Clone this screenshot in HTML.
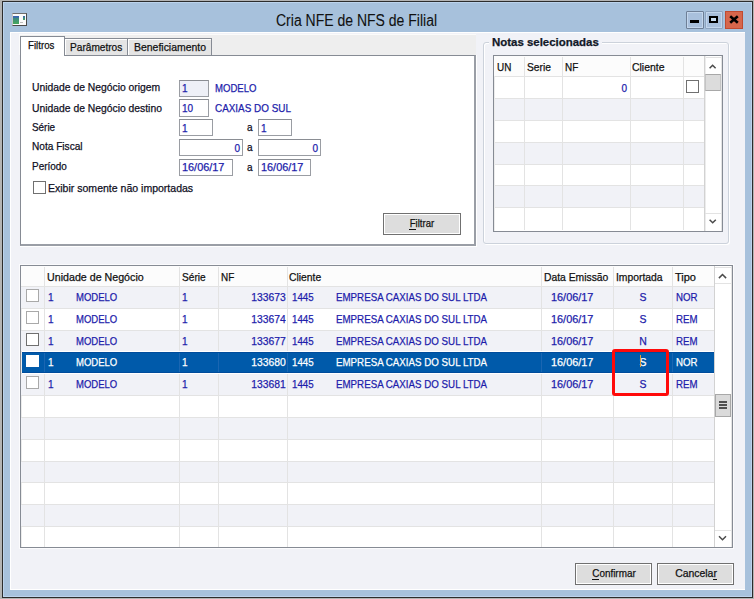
<!DOCTYPE html><html><head><meta charset="utf-8"><style>
html,body{margin:0;padding:0;width:754px;height:599px;overflow:hidden;background:#b4b4b4;}
*{box-sizing:border-box;}
.t{position:absolute;white-space:pre;line-height:20px;font-family:"Liberation Sans",sans-serif;font-size:11px;-webkit-text-stroke:0.25px currentColor;}
</style></head><body>
<div style="position:absolute;left:2px;top:1px;width:751px;height:597px;background:#2c2c2c;"></div>
<div style="position:absolute;left:3px;top:2px;width:749px;height:595px;background:#bcd3ec;"></div>
<div style="position:absolute;left:4px;top:3px;width:747px;height:593px;background:#a7c1dc;"></div>
<div class="t" style="left:276px;top:11px;font-size:16px;color:#111;-webkit-text-stroke:0.1px #111;transform:scaleX(0.875);transform-origin:0 0;">Cria NFE de NFS de Filial</div>
<div style="position:absolute;left:12px;top:13px;width:15px;height:13px;background:#fbfbfb;border-top:1px solid #6e6e6e;border-left:1px solid #c4c4c4;border-right:1px solid #4a4a4a;border-bottom:1px solid #4a4a4a;"></div>
<div style="position:absolute;left:13px;top:16px;width:6px;height:8px;background:linear-gradient(#3a66b0 0,#3a66b0 14%,#3d8a80 30%,#46a85a 100%);"></div>
<div style="position:absolute;left:23px;top:16px;width:2px;height:4px;background:linear-gradient(#3a66b0,#46a85a);"></div>
<div style="position:absolute;left:20px;top:22px;width:3px;height:1px;background:#bdbdbd;"></div>
<div style="position:absolute;left:686px;top:11px;width:18px;height:18px;background:#a9c0dc;border:1px solid #6e7f96;box-shadow:inset 0 0 0 1px #c3d6ec;border-radius:1px;"></div>
<div style="position:absolute;left:690px;top:20px;width:9px;height:3px;background:#000;"></div>
<div style="position:absolute;left:705px;top:11px;width:18px;height:18px;background:#a9c0dc;border:1px solid #8ea4bf;box-shadow:inset 0 0 0 1px #c3d6ec;border-radius:1px;"></div>
<div style="position:absolute;left:709px;top:16px;width:9px;height:7px;border:2px solid #000;background:#c8dcf0;"></div>
<div style="position:absolute;left:725px;top:11px;width:18px;height:18px;background:#d6664c;border:1px solid #c04a30;"></div>
<svg style="position:absolute;left:725px;top:11px" width="18" height="18"><path d="M5.2 5.2 L12.8 11.8 M12.8 5.2 L5.2 11.8" stroke="#000" stroke-width="2.6" stroke-linecap="butt"/></svg>
<div style="position:absolute;left:10px;top:32px;width:735px;height:558px;background:#f1f2f7;border-top:1px solid #fff;border-left:1px solid #fff;border-bottom:1px solid #fff;"></div>
<div style="position:absolute;left:19px;top:34px;width:457px;height:21px;background:#eeeeee;border-top:1px solid #fbfbfb;border-left:1px solid #fbfbfb;"></div>
<div style="position:absolute;left:20px;top:55px;width:457px;height:192px;border-right:1px solid #fff;border-bottom:1px solid #fff;"></div>
<div style="position:absolute;left:20px;top:55px;width:456px;height:191px;background:#fff;border:1px solid #868b94;border-right:2px solid #9a9ea6;border-bottom:2px solid #9a9ea6;"></div>
<div style="position:absolute;left:64px;top:38px;width:64px;height:18px;background:#e4e4e4;border:1px solid #868b94;box-shadow:inset 1px 1px 0 #fff;"></div>
<div style="position:absolute;left:127px;top:38px;width:85px;height:18px;background:#e4e4e4;border:1px solid #868b94;box-shadow:inset 1px 1px 0 #fff;"></div>
<div style="position:absolute;left:20px;top:36px;width:45px;height:20px;background:#fff;border:1px solid #868b94;border-bottom:none;"></div>
<div class="t" style="left:28px;top:35px;color:#111;font-size:11px;font-weight:400;transform:scaleX(0.88);transform-origin:0 0;">Filtros</div>
<div class="t" style="left:70px;top:37px;color:#111;font-size:11px;font-weight:400;transform:scaleX(0.92);transform-origin:0 0;">Parâmetros</div>
<div class="t" style="left:134px;top:37px;color:#111;font-size:11px;font-weight:400;transform:scaleX(0.95);transform-origin:0 0;">Beneficiamento</div>
<div class="t" style="left:32px;top:77px;color:#101024;font-size:11px;font-weight:400;transform:scaleX(0.94);transform-origin:0 0;">Unidade de Negócio origem</div>
<div class="t" style="left:32px;top:98px;color:#101024;font-size:11px;font-weight:400;transform:scaleX(0.94);transform-origin:0 0;">Unidade de Negócio destino</div>
<div class="t" style="left:32px;top:117px;color:#101024;font-size:11px;font-weight:400;transform:scaleX(0.9);transform-origin:0 0;">Série</div>
<div class="t" style="left:32px;top:136px;color:#101024;font-size:11px;font-weight:400;transform:scaleX(0.92);transform-origin:0 0;">Nota Fiscal</div>
<div class="t" style="left:32px;top:156px;color:#101024;font-size:11px;font-weight:400;transform:scaleX(0.906);transform-origin:0 0;">Período</div>
<div style="position:absolute;left:179px;top:80px;width:30px;height:17px;background:#eef0f7;border:1px solid #9a9da3;border-top-color:#8a8d93;"></div>
<div style="position:absolute;left:179px;top:99px;width:30px;height:18px;background:#fff;border:1px solid #9a9da3;border-top-color:#8a8d93;"></div>
<div style="position:absolute;left:179px;top:119px;width:34px;height:17px;background:#fff;border:1px solid #9a9da3;border-top-color:#8a8d93;"></div>
<div style="position:absolute;left:258px;top:119px;width:34px;height:17px;background:#fff;border:1px solid #9a9da3;border-top-color:#8a8d93;"></div>
<div style="position:absolute;left:179px;top:139px;width:64px;height:17px;background:#fff;border:1px solid #9a9da3;border-top-color:#8a8d93;"></div>
<div style="position:absolute;left:258px;top:139px;width:63px;height:17px;background:#fff;border:1px solid #9a9da3;border-top-color:#8a8d93;"></div>
<div style="position:absolute;left:179px;top:159px;width:54px;height:17px;background:#fff;border:1px solid #9a9da3;border-top-color:#8a8d93;"></div>
<div style="position:absolute;left:258px;top:159px;width:53px;height:17px;background:#fff;border:1px solid #9a9da3;border-top-color:#8a8d93;"></div>
<div class="t" style="left:182px;top:78px;color:#1d1dab;font-size:11px;font-weight:400;transform:scaleX(0.91);transform-origin:0 0;">1</div>
<div class="t" style="left:182px;top:98px;color:#1d1dab;font-size:11px;font-weight:400;transform:scaleX(0.91);transform-origin:0 0;">10</div>
<div class="t" style="left:215px;top:78px;color:#1d1dab;font-size:11px;font-weight:400;transform:scaleX(0.87);transform-origin:0 0;">MODELO</div>
<div class="t" style="left:215px;top:98px;color:#1d1dab;font-size:11px;font-weight:400;transform:scaleX(0.9);transform-origin:0 0;">CAXIAS DO SUL</div>
<div class="t" style="left:182px;top:118px;color:#1d1dab;font-size:11px;font-weight:400;transform:scaleX(0.91);transform-origin:0 0;">1</div>
<div class="t" style="left:261px;top:118px;color:#1d1dab;font-size:11px;font-weight:400;transform:scaleX(0.91);transform-origin:0 0;">1</div>
<div class="t" style="right:514px;top:138px;color:#1d1dab;font-size:11px;font-weight:400;transform:scaleX(0.91);transform-origin:100% 0;">0</div>
<div class="t" style="right:436px;top:138px;color:#1d1dab;font-size:11px;font-weight:400;transform:scaleX(0.91);transform-origin:100% 0;">0</div>
<div class="t" style="left:182px;top:157px;color:#1d1dab;font-size:11px;font-weight:400;transform:scaleX(0.99);transform-origin:0 0;">16/06/17</div>
<div class="t" style="left:261px;top:157px;color:#1d1dab;font-size:11px;font-weight:400;transform:scaleX(0.99);transform-origin:0 0;">16/06/17</div>
<div class="t" style="left:247px;top:117px;color:#101024;font-size:11px;font-weight:400;transform:scaleX(0.91);transform-origin:0 0;">a</div>
<div class="t" style="left:247px;top:137px;color:#101024;font-size:11px;font-weight:400;transform:scaleX(0.91);transform-origin:0 0;">a</div>
<div class="t" style="left:247px;top:157px;color:#101024;font-size:11px;font-weight:400;transform:scaleX(0.91);transform-origin:0 0;">a</div>
<div style="position:absolute;left:33px;top:181px;width:13px;height:13px;background:#fff;border:1px solid #707070;"></div>
<div class="t" style="left:48px;top:178px;color:#101024;font-size:11px;font-weight:400;transform:scaleX(0.957);transform-origin:0 0;">Exibir somente não importadas</div>
<div style="position:absolute;left:383px;top:213px;width:78px;height:22px;background:#dddddd;border:1px solid #707070;box-shadow:inset 1px 1px 0 #fff, inset -1px -1px 0 #fff;"></div>
<div class="t" style="left:221.5px;width:400px;text-align:center;top:213px;color:#111;font-size:11px;font-weight:400;transform:scaleX(0.87);transform-origin:50% 0;">Filtrar</div>
<div style="position:absolute;left:409px;top:229px;width:7px;height:1px;background:#111;"></div>
<div style="position:absolute;left:483px;top:42px;width:246px;height:202px;border:1px solid #ccd2db;border-radius:3px;box-shadow:inset 1px 1px 0 #fff, 1px 1px 0 #fff;"></div>
<div style="position:absolute;left:489px;top:36px;width:113px;height:12px;background:#f1f2f7;"></div>
<div class="t" style="left:492px;top:32px;color:#111827;font-size:11px;font-weight:700;transform:scaleX(1.04);transform-origin:0 0;">Notas selecionadas</div>
<div style="position:absolute;left:493px;top:55px;width:230px;height:177px;background:#fff;border:1px solid #868b94;box-shadow:inset 1px 1px 0 #ececec;"></div>
<div style="position:absolute;left:495px;top:99px;width:209px;height:21px;background:#f1f2f7;"></div>
<div style="position:absolute;left:495px;top:143px;width:209px;height:21px;background:#f1f2f7;"></div>
<div style="position:absolute;left:495px;top:186px;width:209px;height:21px;background:#f1f2f7;"></div>
<div style="position:absolute;left:494px;top:56px;width:210px;height:20px;background:#fcfcfc;"></div>
<div style="position:absolute;left:495px;top:76px;width:209px;height:1px;background:#e3e3e3;"></div>
<div style="position:absolute;left:495px;top:98px;width:209px;height:1px;background:#e3e3e3;"></div>
<div style="position:absolute;left:495px;top:120px;width:209px;height:1px;background:#e3e3e3;"></div>
<div style="position:absolute;left:495px;top:142px;width:209px;height:1px;background:#e3e3e3;"></div>
<div style="position:absolute;left:495px;top:164px;width:209px;height:1px;background:#e3e3e3;"></div>
<div style="position:absolute;left:495px;top:185px;width:209px;height:1px;background:#e3e3e3;"></div>
<div style="position:absolute;left:495px;top:207px;width:209px;height:1px;background:#e3e3e3;"></div>
<div style="position:absolute;left:524px;top:57px;width:1px;height:173px;background:#e3e3e3;"></div>
<div style="position:absolute;left:562px;top:57px;width:1px;height:173px;background:#e3e3e3;"></div>
<div style="position:absolute;left:630px;top:57px;width:1px;height:173px;background:#e3e3e3;"></div>
<div style="position:absolute;left:683px;top:57px;width:1px;height:173px;background:#e3e3e3;"></div>
<div class="t" style="left:497px;top:57px;color:#111;font-size:11px;font-weight:400;transform:scaleX(0.9);transform-origin:0 0;">UN</div>
<div class="t" style="left:527px;top:57px;color:#111;font-size:11px;font-weight:400;transform:scaleX(0.93);transform-origin:0 0;">Serie</div>
<div class="t" style="left:565px;top:57px;color:#111;font-size:11px;font-weight:400;transform:scaleX(0.9);transform-origin:0 0;">NF</div>
<div class="t" style="left:632px;top:57px;color:#111;font-size:11px;font-weight:400;transform:scaleX(0.95);transform-origin:0 0;">Cliente</div>
<div class="t" style="right:127px;top:78px;color:#1d1dab;font-size:11px;font-weight:400;transform:scaleX(0.91);transform-origin:100% 0;">0</div>
<div style="position:absolute;left:686px;top:80px;width:13px;height:13px;background:#fff;border:1px solid #707070;"></div>
<div style="position:absolute;left:704px;top:56px;width:18px;height:175px;background:#fff;border-left:1px solid #d2d2d2;box-shadow:inset 1px 0 0 #ececec;border-right:1px solid #e4e4e4;"></div>
<div style="position:absolute;left:706px;top:57px;width:15px;height:1px;background:#e2e2e2;"></div>
<div style="position:absolute;left:705px;top:74px;width:16px;height:17px;background:#dcdcdc;border:1px solid #c4c4c4;border-top-color:#a8a8a8;border-bottom-color:#a8a8a8;"></div>
<svg style="position:absolute;left:704px;top:57px" width="18" height="17"><path d="M5.6 11.2 L8.6 8.2 L11.6 11.2" stroke="#4a4a4a" stroke-width="1.5" fill="none"/></svg>
<svg style="position:absolute;left:704px;top:213px" width="18" height="17"><path d="M5.6 6.7 L8.7 9.8 L11.8 6.7" stroke="#4a4a4a" stroke-width="1.5" fill="none"/></svg>
<div style="position:absolute;left:705px;top:213px;width:16px;height:1px;background:#e3e3e3;"></div>
<div style="position:absolute;left:19px;top:264px;width:715px;height:285px;border:1px solid #fbfbfd;"></div>
<div style="position:absolute;left:20px;top:265px;width:713px;height:283px;background:#fff;border:1px solid #868b94;box-shadow:inset 1px 1px 0 #ececec;"></div>
<div style="position:absolute;left:21px;top:266px;width:693px;height:20px;background:#fcfcfc;"></div>
<div style="position:absolute;left:21px;top:287px;width:693px;height:21px;background:#f1f2f7;"></div>
<div style="position:absolute;left:21px;top:331px;width:693px;height:20px;background:#f1f2f7;"></div>
<div style="position:absolute;left:21px;top:374px;width:693px;height:21px;background:#f1f2f7;"></div>
<div style="position:absolute;left:21px;top:418px;width:693px;height:21px;background:#f1f2f7;"></div>
<div style="position:absolute;left:21px;top:462px;width:693px;height:20px;background:#f1f2f7;"></div>
<div style="position:absolute;left:21px;top:505px;width:693px;height:21px;background:#f1f2f7;"></div>
<div style="position:absolute;left:21px;top:286px;width:693px;height:1px;background:#e3e3e3;"></div>
<div style="position:absolute;left:21px;top:308px;width:693px;height:1px;background:#e3e3e3;"></div>
<div style="position:absolute;left:21px;top:330px;width:693px;height:1px;background:#e3e3e3;"></div>
<div style="position:absolute;left:21px;top:351px;width:693px;height:1px;background:#e3e3e3;"></div>
<div style="position:absolute;left:21px;top:373px;width:693px;height:1px;background:#e3e3e3;"></div>
<div style="position:absolute;left:21px;top:395px;width:693px;height:1px;background:#e3e3e3;"></div>
<div style="position:absolute;left:21px;top:417px;width:693px;height:1px;background:#e3e3e3;"></div>
<div style="position:absolute;left:21px;top:439px;width:693px;height:1px;background:#e3e3e3;"></div>
<div style="position:absolute;left:21px;top:461px;width:693px;height:1px;background:#e3e3e3;"></div>
<div style="position:absolute;left:21px;top:482px;width:693px;height:1px;background:#e3e3e3;"></div>
<div style="position:absolute;left:21px;top:504px;width:693px;height:1px;background:#e3e3e3;"></div>
<div style="position:absolute;left:21px;top:526px;width:693px;height:1px;background:#e3e3e3;"></div>
<div style="position:absolute;left:44px;top:267px;width:1px;height:280px;background:#e3e3e3;"></div>
<div style="position:absolute;left:179px;top:267px;width:1px;height:280px;background:#e3e3e3;"></div>
<div style="position:absolute;left:218px;top:267px;width:1px;height:280px;background:#e3e3e3;"></div>
<div style="position:absolute;left:287px;top:267px;width:1px;height:280px;background:#e3e3e3;"></div>
<div style="position:absolute;left:541px;top:267px;width:1px;height:280px;background:#e3e3e3;"></div>
<div style="position:absolute;left:613px;top:267px;width:1px;height:280px;background:#e3e3e3;"></div>
<div style="position:absolute;left:672px;top:267px;width:1px;height:280px;background:#e3e3e3;"></div>
<div style="position:absolute;left:22px;top:351px;width:692px;height:23px;background:#005aaa;border-top:1px solid #fff;border-bottom:1px solid #fff;"></div>
<div style="position:absolute;left:22px;top:352px;width:692px;height:1px;background:#004c9c;"></div>
<div style="position:absolute;left:22px;top:372px;width:692px;height:1px;background:#004c9c;"></div>
<div style="position:absolute;left:44px;top:353px;width:1px;height:19px;background:#1a66b2;"></div>
<div style="position:absolute;left:179px;top:353px;width:1px;height:19px;background:#1a66b2;"></div>
<div style="position:absolute;left:218px;top:353px;width:1px;height:19px;background:#1a66b2;"></div>
<div style="position:absolute;left:287px;top:353px;width:1px;height:19px;background:#1a66b2;"></div>
<div style="position:absolute;left:541px;top:353px;width:1px;height:19px;background:#1a66b2;"></div>
<div style="position:absolute;left:613px;top:353px;width:1px;height:19px;background:#1a66b2;"></div>
<div style="position:absolute;left:672px;top:353px;width:1px;height:19px;background:#1a66b2;"></div>
<div class="t" style="left:47px;top:267px;color:#111;font-size:11px;font-weight:400;transform:scaleX(0.97);transform-origin:0 0;">Unidade de Negócio</div>
<div class="t" style="left:182px;top:267px;color:#111;font-size:11px;font-weight:400;transform:scaleX(0.92);transform-origin:0 0;">Série</div>
<div class="t" style="left:221px;top:267px;color:#111;font-size:11px;font-weight:400;transform:scaleX(0.9);transform-origin:0 0;">NF</div>
<div class="t" style="left:289px;top:267px;color:#111;font-size:11px;font-weight:400;transform:scaleX(0.94);transform-origin:0 0;">Cliente</div>
<div class="t" style="left:544px;top:267px;color:#111;font-size:11px;font-weight:400;transform:scaleX(0.94);transform-origin:0 0;">Data Emissão</div>
<div class="t" style="left:616px;top:267px;color:#111;font-size:11px;font-weight:400;transform:scaleX(0.94);transform-origin:0 0;">Importada</div>
<div class="t" style="left:675px;top:267px;color:#111;font-size:11px;font-weight:400;transform:scaleX(1.0);transform-origin:0 0;">Tipo</div>
<div style="position:absolute;left:26px;top:289px;width:13px;height:13px;background:#fff;border:1px solid #a9a9a9;"></div>
<div class="t" style="left:48px;top:287px;color:#1d1dab;font-size:11px;font-weight:400;transform:scaleX(0.91);transform-origin:0 0;">1</div>
<div class="t" style="left:76px;top:287px;color:#1d1dab;font-size:11px;font-weight:400;transform:scaleX(0.865);transform-origin:0 0;">MODELO</div>
<div class="t" style="left:182px;top:287px;color:#1d1dab;font-size:11px;font-weight:400;transform:scaleX(0.91);transform-origin:0 0;">1</div>
<div class="t" style="right:468.5px;top:287px;color:#1d1dab;font-size:11px;font-weight:400;transform:scaleX(0.94);transform-origin:100% 0;">133673</div>
<div class="t" style="left:292px;top:287px;color:#1d1dab;font-size:11px;font-weight:400;transform:scaleX(0.886);transform-origin:0 0;">1445</div>
<div class="t" style="left:336px;top:287px;color:#1d1dab;font-size:11px;font-weight:400;transform:scaleX(0.886);transform-origin:0 0;">EMPRESA CAXIAS DO SUL LTDA</div>
<div class="t" style="left:551px;top:287px;color:#1d1dab;font-size:11px;font-weight:400;transform:scaleX(0.99);transform-origin:0 0;">16/06/17</div>
<div class="t" style="left:442.6px;width:400px;text-align:center;top:287px;color:#1d1dab;font-size:11px;font-weight:400;transform:scaleX(0.95);transform-origin:50% 0;">S</div>
<div class="t" style="left:676px;top:287px;color:#1d1dab;font-size:11px;font-weight:400;transform:scaleX(0.88);transform-origin:0 0;">NOR</div>
<div style="position:absolute;left:26px;top:311px;width:13px;height:13px;background:#fff;border:1px solid #a9a9a9;"></div>
<div class="t" style="left:48px;top:309px;color:#1d1dab;font-size:11px;font-weight:400;transform:scaleX(0.91);transform-origin:0 0;">1</div>
<div class="t" style="left:76px;top:309px;color:#1d1dab;font-size:11px;font-weight:400;transform:scaleX(0.865);transform-origin:0 0;">MODELO</div>
<div class="t" style="left:182px;top:309px;color:#1d1dab;font-size:11px;font-weight:400;transform:scaleX(0.91);transform-origin:0 0;">1</div>
<div class="t" style="right:468.5px;top:309px;color:#1d1dab;font-size:11px;font-weight:400;transform:scaleX(0.94);transform-origin:100% 0;">133674</div>
<div class="t" style="left:292px;top:309px;color:#1d1dab;font-size:11px;font-weight:400;transform:scaleX(0.886);transform-origin:0 0;">1445</div>
<div class="t" style="left:336px;top:309px;color:#1d1dab;font-size:11px;font-weight:400;transform:scaleX(0.886);transform-origin:0 0;">EMPRESA CAXIAS DO SUL LTDA</div>
<div class="t" style="left:551px;top:309px;color:#1d1dab;font-size:11px;font-weight:400;transform:scaleX(0.99);transform-origin:0 0;">16/06/17</div>
<div class="t" style="left:442.6px;width:400px;text-align:center;top:309px;color:#1d1dab;font-size:11px;font-weight:400;transform:scaleX(0.95);transform-origin:50% 0;">S</div>
<div class="t" style="left:676px;top:309px;color:#1d1dab;font-size:11px;font-weight:400;transform:scaleX(0.88);transform-origin:0 0;">REM</div>
<div style="position:absolute;left:26px;top:333px;width:13px;height:13px;background:#fff;border:1px solid #6f6f6f;"></div>
<div class="t" style="left:48px;top:331px;color:#1d1dab;font-size:11px;font-weight:400;transform:scaleX(0.91);transform-origin:0 0;">1</div>
<div class="t" style="left:76px;top:331px;color:#1d1dab;font-size:11px;font-weight:400;transform:scaleX(0.865);transform-origin:0 0;">MODELO</div>
<div class="t" style="left:182px;top:331px;color:#1d1dab;font-size:11px;font-weight:400;transform:scaleX(0.91);transform-origin:0 0;">1</div>
<div class="t" style="right:468.5px;top:331px;color:#1d1dab;font-size:11px;font-weight:400;transform:scaleX(0.94);transform-origin:100% 0;">133677</div>
<div class="t" style="left:292px;top:331px;color:#1d1dab;font-size:11px;font-weight:400;transform:scaleX(0.886);transform-origin:0 0;">1445</div>
<div class="t" style="left:336px;top:331px;color:#1d1dab;font-size:11px;font-weight:400;transform:scaleX(0.886);transform-origin:0 0;">EMPRESA CAXIAS DO SUL LTDA</div>
<div class="t" style="left:551px;top:331px;color:#1d1dab;font-size:11px;font-weight:400;transform:scaleX(0.99);transform-origin:0 0;">16/06/17</div>
<div class="t" style="left:442.6px;width:400px;text-align:center;top:331px;color:#1d1dab;font-size:11px;font-weight:400;transform:scaleX(0.95);transform-origin:50% 0;">N</div>
<div class="t" style="left:676px;top:331px;color:#1d1dab;font-size:11px;font-weight:400;transform:scaleX(0.88);transform-origin:0 0;">REM</div>
<div style="position:absolute;left:26px;top:355px;width:13px;height:12px;background:#fff;"></div>
<div class="t" style="left:48px;top:352px;color:#fff;font-size:11px;font-weight:400;transform:scaleX(0.91);transform-origin:0 0;">1</div>
<div class="t" style="left:76px;top:352px;color:#fff;font-size:11px;font-weight:400;transform:scaleX(0.865);transform-origin:0 0;">MODELO</div>
<div class="t" style="left:182px;top:352px;color:#fff;font-size:11px;font-weight:400;transform:scaleX(0.91);transform-origin:0 0;">1</div>
<div class="t" style="right:468.5px;top:352px;color:#fff;font-size:11px;font-weight:400;transform:scaleX(0.94);transform-origin:100% 0;">133680</div>
<div class="t" style="left:292px;top:352px;color:#fff;font-size:11px;font-weight:400;transform:scaleX(0.886);transform-origin:0 0;">1445</div>
<div class="t" style="left:336px;top:352px;color:#fff;font-size:11px;font-weight:400;transform:scaleX(0.886);transform-origin:0 0;">EMPRESA CAXIAS DO SUL LTDA</div>
<div class="t" style="left:551px;top:352px;color:#fff;font-size:11px;font-weight:400;transform:scaleX(0.99);transform-origin:0 0;">16/06/17</div>
<div class="t" style="left:442.6px;width:400px;text-align:center;top:352px;color:#fff;font-size:11px;font-weight:400;transform:scaleX(0.95);transform-origin:50% 0;">S</div>
<div class="t" style="left:676px;top:352px;color:#fff;font-size:11px;font-weight:400;transform:scaleX(0.88);transform-origin:0 0;">NOR</div>
<div style="position:absolute;left:26px;top:376px;width:13px;height:13px;background:#fff;border:1px solid #a9a9a9;"></div>
<div class="t" style="left:48px;top:374px;color:#1d1dab;font-size:11px;font-weight:400;transform:scaleX(0.91);transform-origin:0 0;">1</div>
<div class="t" style="left:76px;top:374px;color:#1d1dab;font-size:11px;font-weight:400;transform:scaleX(0.865);transform-origin:0 0;">MODELO</div>
<div class="t" style="left:182px;top:374px;color:#1d1dab;font-size:11px;font-weight:400;transform:scaleX(0.91);transform-origin:0 0;">1</div>
<div class="t" style="right:468.5px;top:374px;color:#1d1dab;font-size:11px;font-weight:400;transform:scaleX(0.94);transform-origin:100% 0;">133681</div>
<div class="t" style="left:292px;top:374px;color:#1d1dab;font-size:11px;font-weight:400;transform:scaleX(0.886);transform-origin:0 0;">1445</div>
<div class="t" style="left:336px;top:374px;color:#1d1dab;font-size:11px;font-weight:400;transform:scaleX(0.886);transform-origin:0 0;">EMPRESA CAXIAS DO SUL LTDA</div>
<div class="t" style="left:551px;top:374px;color:#1d1dab;font-size:11px;font-weight:400;transform:scaleX(0.99);transform-origin:0 0;">16/06/17</div>
<div class="t" style="left:442.6px;width:400px;text-align:center;top:374px;color:#1d1dab;font-size:11px;font-weight:400;transform:scaleX(0.95);transform-origin:50% 0;">S</div>
<div class="t" style="left:676px;top:374px;color:#1d1dab;font-size:11px;font-weight:400;transform:scaleX(0.88);transform-origin:0 0;">REM</div>
<div style="position:absolute;left:640px;top:355px;width:1px;height:12px;background:#e0a040;"></div>
<div style="position:absolute;left:714px;top:266px;width:18px;height:281px;background:#fff;border-left:1px solid #d2d2d2;border-right:1px solid #e4e4e4;"></div>
<div style="position:absolute;left:715px;top:267px;width:16px;height:1px;background:#e2e2e2;"></div>
<div style="position:absolute;left:715px;top:283px;width:16px;height:1px;background:#e3e3e3;"></div>
<div style="position:absolute;left:715px;top:530px;width:16px;height:1px;background:#e3e3e3;"></div>
<div style="position:absolute;left:715px;top:394px;width:16px;height:23px;background:#dadada;border:1px solid #a8a8a8;"></div>
<div style="position:absolute;left:719px;top:401px;width:8px;height:2px;background:#505050;"></div>
<div style="position:absolute;left:719px;top:404px;width:8px;height:2px;background:#505050;"></div>
<div style="position:absolute;left:719px;top:407px;width:8px;height:2px;background:#505050;"></div>
<svg style="position:absolute;left:714px;top:267px" width="18" height="17"><path d="M4.9 11.1 L8.5 7.5 L12.1 11.1" stroke="#4a4a4a" stroke-width="1.5" fill="none"/></svg>
<svg style="position:absolute;left:714px;top:530px" width="18" height="16"><path d="M5 6.2 L8.5 9.7 L12 6.2" stroke="#4a4a4a" stroke-width="1.5" fill="none"/></svg>
<div style="position:absolute;left:612px;top:349px;width:57px;height:47px;border:3px solid #ff0a0a;border-radius:3px;"></div>
<div style="position:absolute;left:575px;top:563px;width:77px;height:22px;background:#dddddd;border:1px solid #707070;box-shadow:inset 1px 1px 0 #fff, inset -1px -1px 0 #fff;"></div>
<div class="t" style="left:413.5px;width:400px;text-align:center;top:563px;color:#111;font-size:11px;font-weight:400;transform:scaleX(0.9);transform-origin:50% 0;">Confirmar</div>
<div style="position:absolute;left:657px;top:563px;width:77px;height:22px;background:#dddddd;border:1px solid #707070;box-shadow:inset 1px 1px 0 #fff, inset -1px -1px 0 #fff;"></div>
<div class="t" style="left:495.5px;width:400px;text-align:center;top:563px;color:#111;font-size:11px;font-weight:400;transform:scaleX(0.948);transform-origin:50% 0;">Cancelar</div>
<div style="position:absolute;left:592px;top:579px;width:7px;height:1px;background:#111;"></div>
<div style="position:absolute;left:713px;top:579px;width:4px;height:1px;background:#111;"></div>
</body></html>
